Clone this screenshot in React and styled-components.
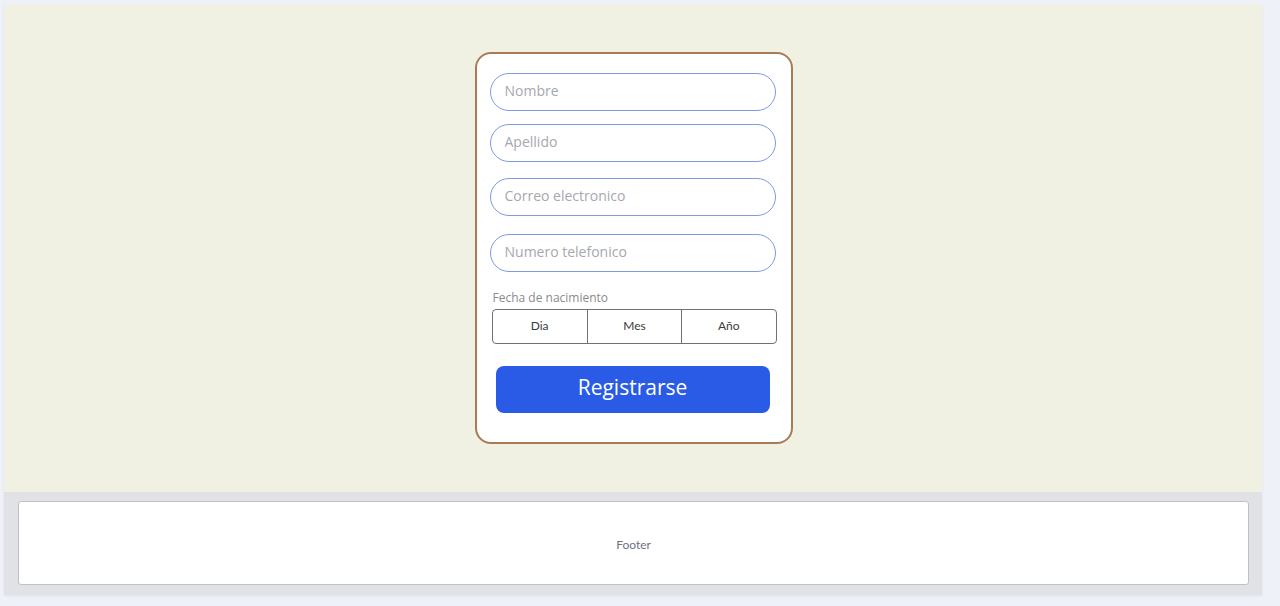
import styled, { createGlobalStyle } from "styled-components";

const GlobalStyle = createGlobalStyle`
  body {
    margin: 0;
    padding: 4px;
    background: #eef1f7;
    font-family: "Open Sans", "Liberation Sans", sans-serif;
  }
`;

const Page = styled.div`
  width: 1258px;
  height: 591px;
  display: flex;
  flex-direction: column;
  box-shadow: 0 1px 3px rgba(0, 0, 0, 0.06);
`;

const Main = styled.main`
  height: 488px;
  background: #f0f0e3;
  display: flex;
  justify-content: center;
  padding: 48px 0 0 1px;
  box-sizing: border-box;
`;

const Card = styled.form`
  width: 318px;
  height: 392px;
  box-sizing: border-box;
  background: #fff;
  border: 2px solid #a87b57;
  border-radius: 16px;
  padding: 19px 13px 0 13px;
  display: flex;
  flex-direction: column;
`;

const Input = styled.input`
  width: 286px;
  height: 38px;
  box-sizing: border-box;
  border: 1px solid #7d9be2;
  border-radius: 19px;
  padding: 0 14px 3px;
  margin-bottom: ${({ $gap }) => $gap}px;
  font-family: "Open Sans", sans-serif;
  font-size: 14px;
  color: #444;
  outline: none;
  &::placeholder {
    color: #a5a8ae;
  }
`;

const Label = styled.span`
  font-size: 12px;
  color: #8a8b8e;
  margin: 19px 0 4px 3px;
  line-height: 14px;
`;

const DateGroup = styled.div`
  width: 285px;
  height: 35px;
  margin-left: 2px;
  box-sizing: border-box;
  border: 1px solid #6f7276;
  border-radius: 4px;
  display: grid;
  grid-template-columns: 1fr 1fr 1fr;
`;

const DateCell = styled.div`
  display: flex;
  align-items: center;
  justify-content: center;
  padding-bottom: 2px;
  font-family: Lato, sans-serif;
  font-size: 12px;
  color: #3a3c40;
  & + & {
    border-left: 1px solid #6f7276;
  }
`;

const Submit = styled.button`
  width: 274px;
  height: 47px;
  margin: 22px 0 0 6px;
  padding: 0 0 5px;
  border: none;
  border-radius: 8px;
  background: #2a5be6;
  color: #fff;
  font-family: "Open Sans", sans-serif;
  font-size: 21px;
  cursor: pointer;
`;

const FooterBar = styled.footer`
  flex: 1;
  background: #e1e2e6;
  padding: 9px 13px 10px 14px;
  display: flex;
`;

const FooterBox = styled.div`
  flex: 1;
  background: #fff;
  border: 1px solid #bfc1c6;
  border-radius: 3px;
  display: flex;
  align-items: center;
  justify-content: center;
  padding-top: 3px;
  font-family: Lato, sans-serif;
  font-size: 12px;
  color: #6e7180;
`;

export default function App() {
  return (
    <>
      <GlobalStyle />
      <Page>
        <Main>
          <Card onSubmit={(e) => e.preventDefault()}>
            <Input placeholder="Nombre" $gap={13} />
            <Input placeholder="Apellido" $gap={16} />
            <Input placeholder="Correo electronico" $gap={18} />
            <Input placeholder="Numero telefonico" $gap={0} />
            <Label>Fecha de nacimiento</Label>
            <DateGroup>
              <DateCell>Dia</DateCell>
              <DateCell>Mes</DateCell>
              <DateCell>Año</DateCell>
            </DateGroup>
            <Submit type="submit">Registrarse</Submit>
          </Card>
        </Main>
        <FooterBar>
          <FooterBox>Footer</FooterBox>
        </FooterBar>
      </Page>
    </>
  );
}
